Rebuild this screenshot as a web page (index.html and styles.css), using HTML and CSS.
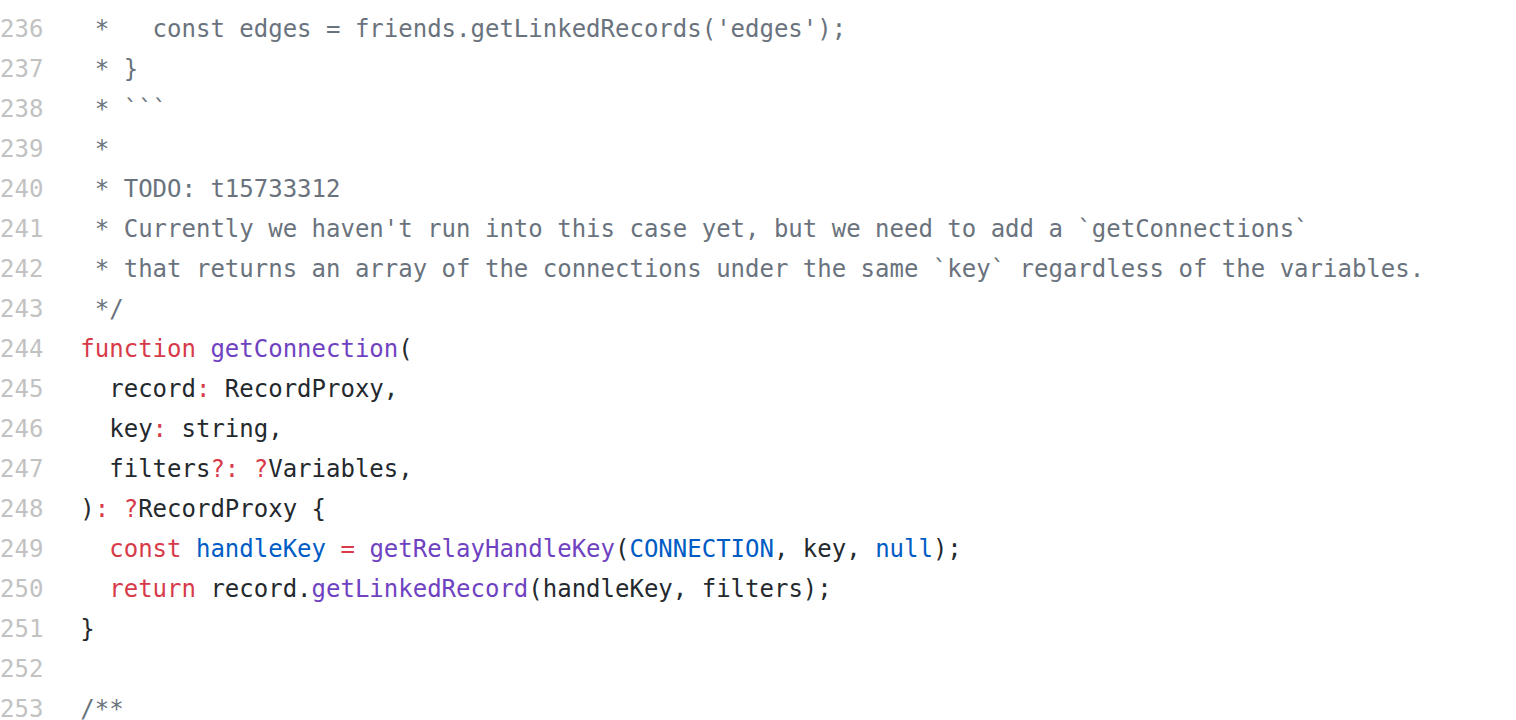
FILE: index.html
```
<!DOCTYPE html>
<html>
<head>
<meta charset="utf-8">
<link rel="stylesheet" href="styles.css">
</head>
<body>
<div class="code">
  <div class="line"><span class="ln">236</span><span class="src"><span class="c"> *   const edges = friends.getLinkedRecords('edges');</span></span></div>
  <div class="line"><span class="ln">237</span><span class="src"><span class="c"> * }</span></span></div>
  <div class="line"><span class="ln">238</span><span class="src"><span class="c"> * ```</span></span></div>
  <div class="line"><span class="ln">239</span><span class="src"><span class="c"> *</span></span></div>
  <div class="line"><span class="ln">240</span><span class="src"><span class="c"> * TODO: t15733312</span></span></div>
  <div class="line"><span class="ln">241</span><span class="src"><span class="c"> * Currently we haven't run into this case yet, but we need to add a `getConnections`</span></span></div>
  <div class="line"><span class="ln">242</span><span class="src"><span class="c"> * that returns an array of the connections under the same `key` regardless of the variables.</span></span></div>
  <div class="line"><span class="ln">243</span><span class="src"><span class="c"> */</span></span></div>
  <div class="line"><span class="ln">244</span><span class="src"><span class="k">function</span> <span class="e">getConnection</span>(</span></div>
  <div class="line"><span class="ln">245</span><span class="src">  record<span class="k">:</span> RecordProxy,</span></div>
  <div class="line"><span class="ln">246</span><span class="src">  key<span class="k">:</span> string,</span></div>
  <div class="line"><span class="ln">247</span><span class="src">  filters<span class="k">?:</span> <span class="k">?</span>Variables,</span></div>
  <div class="line"><span class="ln">248</span><span class="src">)<span class="k">:</span> <span class="k">?</span>RecordProxy {</span></div>
  <div class="line"><span class="ln">249</span><span class="src">  <span class="k">const</span> <span class="v">handleKey</span> <span class="k">=</span> <span class="e">getRelayHandleKey</span>(<span class="v">CONNECTION</span>, key, <span class="v">null</span>);</span></div>
  <div class="line"><span class="ln">250</span><span class="src">  <span class="k">return</span> record.<span class="e">getLinkedRecord</span>(handleKey, filters);</span></div>
  <div class="line"><span class="ln">251</span><span class="src">}</span></div>
  <div class="line"><span class="ln">252</span><span class="src"></span></div>
  <div class="line"><span class="ln">253</span><span class="src"><span class="c">/**</span></span></div>
</div>
</body>
</html>
```
FILE: styles.css
```
html, body {
  margin: 0;
  padding: 0;
  background: #ffffff;
  overflow: hidden;
}

.code {
  padding-top: 9px;
  font-family: "DejaVu Sans Mono", "Liberation Mono", monospace;
  font-size: 24px;
  line-height: 40px;
  color: #24292e;
}

.line {
  display: flex;
  height: 40px;
}

.ln {
  flex: 0 0 40px;
  text-align: right;
  color: #c2c2c2;
  white-space: nowrap;
  direction: rtl;
  overflow: visible;
}

.src {
  margin-left: 37px;
  white-space: pre;
}

.c { color: #6a737d; }
.k { color: #d73a49; }
.e { color: #6f42c1; }
.v { color: #005cc5; }
```
